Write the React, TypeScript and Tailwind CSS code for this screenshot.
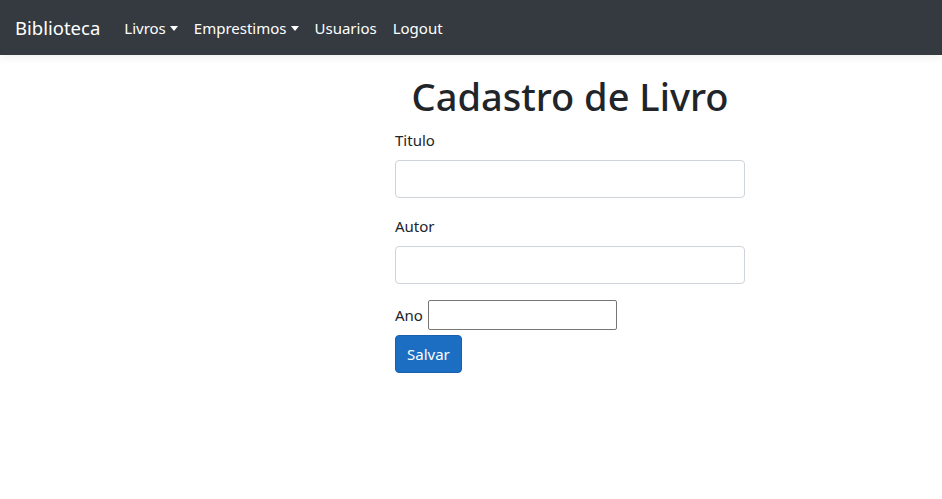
import React, { useState } from 'react';

const font = { fontFamily: '"Noto Sans", "Open Sans", Arial, sans-serif' };

const Caret = () => (
  <span className="ml-[4px] inline-block h-0 w-0 border-x-[4px] border-t-[5px] border-x-transparent border-t-white align-[3px]" />
);

const App = () => {
  const [titulo, setTitulo] = useState('');
  const [autor, setAutor] = useState('');
  const [ano, setAno] = useState('');

  return (
    <div className="min-h-[499px] bg-white text-[#212529]" style={font}>
      <nav className="flex h-[55px] items-center bg-[#343a40] px-[15px] shadow-[0_3px_8px_rgba(0,0,0,0.06)]">
        <span className="mr-[16px] text-[18.5px] leading-[30px] text-white">Biblioteca</span>
        <ul className="flex items-center text-[15px] leading-[24px] text-white">
          <li className="px-[8px]">Livros<Caret /></li>
          <li className="px-[8px]">Emprestimos<Caret /></li>
          <li className="px-[8px]">Usuarios</li>
          <li className="px-[8px]">Logout</li>
        </ul>
      </nav>

      <main className="pl-[395px] pt-[17px]">
        <div className="w-[350px]">
          <h1 className="mb-[8px] text-center text-[38px] font-medium leading-[48px]">Cadastro de Livro</h1>
          <form onSubmit={e => e.preventDefault()} className="text-[15px] leading-[24px]">
            <div className="mb-[16px]">
              <label className="mb-[8px] block">Titulo</label>
              <input
                className="block h-[38px] w-full rounded-[4px] border border-[#ced4da] px-[12px] outline-none"
                value={titulo}
                onChange={e => setTitulo(e.target.value)}
              />
            </div>
            <div className="mb-[16px]">
              <label className="mb-[8px] block">Autor</label>
              <input
                className="block h-[38px] w-full rounded-[4px] border border-[#ced4da] px-[12px] outline-none"
                value={autor}
                onChange={e => setAutor(e.target.value)}
              />
            </div>
            <div className="flex items-center gap-[5px]">
              <label>Ano</label>
              <input
                className="h-[30px] w-[189px] rounded-[2px] border border-[#767676] px-[2px] outline-none"
                value={ano}
                onChange={e => setAno(e.target.value)}
              />
            </div>
            <button className="mt-[5px] h-[38px] rounded-[4px] border border-[#1861ac] bg-[#1b6ec2] px-[11px] text-white">
              Salvar
            </button>
          </form>
        </div>
      </main>
    </div>
  );
};

export default App;
